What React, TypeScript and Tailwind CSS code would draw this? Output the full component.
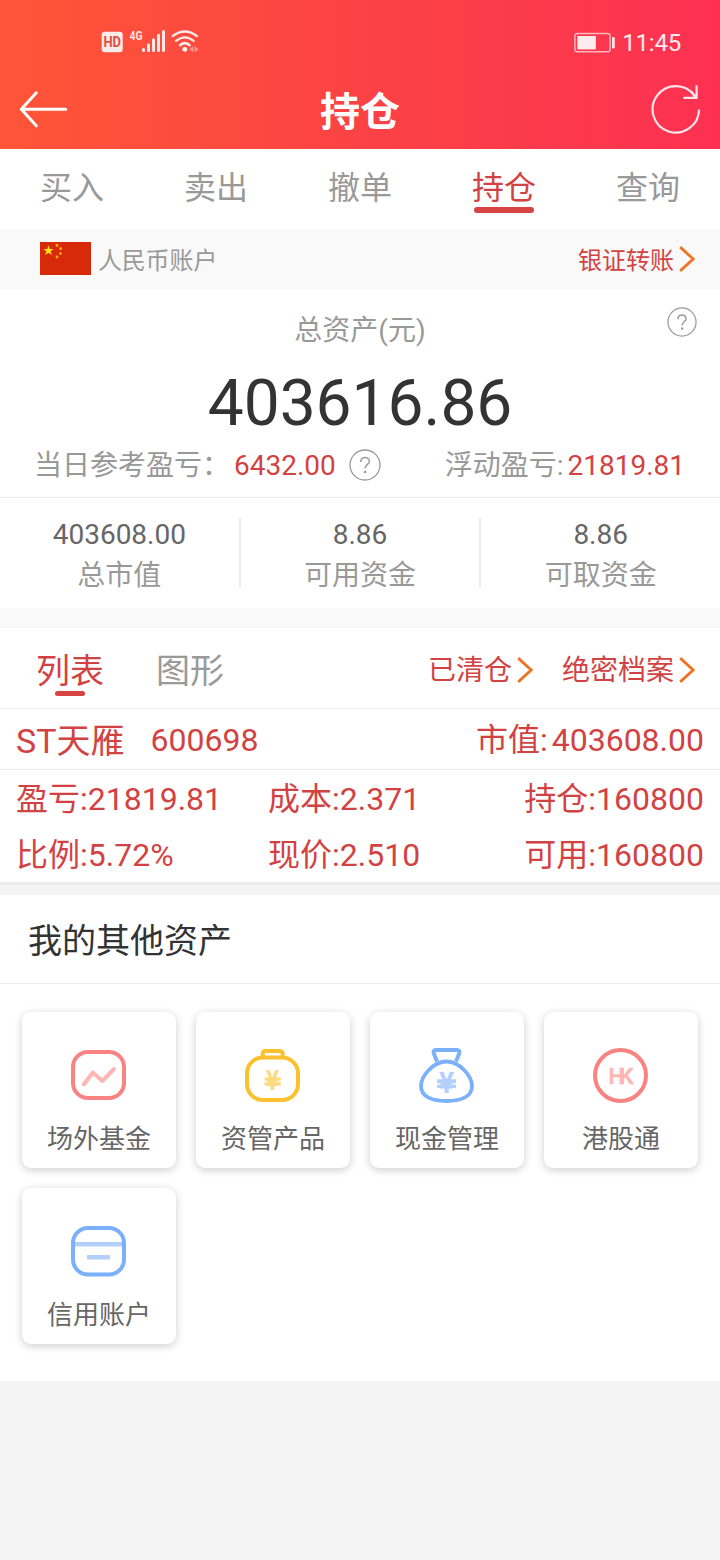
import type { ReactNode } from "react";

const tabs = ["买入", "卖出", "撤单", "持仓", "查询"];

const funds = [
  { value: "403608.00", label: "总市值" },
  { value: "8.86", label: "可用资金" },
  { value: "8.86", label: "可取资金" },
];

function StatusBar() {
  return (
    <div className="flex h-[70px] items-start justify-between pr-[39px] pl-[101px]">
      <svg className="mt-[28px]" width="100" height="28" viewBox="101 28 100 28" fill="none">
        <rect x="101.7" y="31.7" width="21" height="20.6" rx="3" fill="#ffeaea" />
        <text x="103.4" y="46.9" textLength="17.6" lengthAdjust="spacingAndGlyphs" fill="#e0503f" fontFamily="Roboto" fontWeight="700" fontSize="14.5">HD</text>
        <text x="129.6" y="40" textLength="13" lengthAdjust="spacingAndGlyphs" fill="#ffe3e0" fontFamily="Roboto" fontWeight="700" fontSize="13.5">4G</text>
        <g stroke="#ffeae8" strokeWidth="3" strokeLinecap="round">
          <path d="M143.5 49.6v.8M148.5 44.7v5.700M153.5 39.7v10.700M158.5 35.2v15.200M163.5 31.5v18.900" />
        </g>
        <g stroke="#ffeae8" strokeWidth="2.3" strokeLinecap="round">
          <path d="M172.6 36.1Q184.8 27 197 36.1" />
          <path d="M176 40.9Q184.8 33.8 193.6 40.9" />
          <path d="M180 45.2Q184.8 41 189.6 45.2" strokeWidth="2.5" />
        </g>
        <circle cx="184.8" cy="49.3" r="2.4" fill="#fff" />
        <path d="M193.3 46.2v6l-4-3zM194.6 46.2v6l4-3z" fill="#ff9d92" />
      </svg>
      <div className="mt-[29px] flex items-center gap-[6px] text-white/90">
        <svg className="-mt-[2px]" width="42" height="21" viewBox="0 0 42 21" fill="none">
          <rect x=".9" y="1.4" width="35.2" height="18.4" rx="2.6" stroke="#ffb5bb" strokeWidth="1.5" />
          <rect x="3.3" y="4" width="18.6" height="13.4" fill="#ffeaec" />
          <rect x="38" y="5" width="2.8" height="11.4" rx="1" fill="#ffe0e3" />
        </svg>
        <span className="text-[24px] leading-[28px] tracking-[-0.2px]">11:45</span>
      </div>
    </div>
  );
}

function Header() {
  return (
    <header className="h-[149px] bg-linear-to-r from-[#ff5537] via-[#fb4244] to-[#fd3052]">
      <StatusBar />
      <div className="flex h-[79px] items-center justify-between pr-[18px] pl-[18px]">
        <svg width="52" height="44" viewBox="18 88 52 44" fill="none" stroke="#fff" strokeWidth="3" strokeLinecap="round" strokeLinejoin="round">
          <path d="M65.7 109.3H21.5M36.3 92.8L21.3 109.3L36.3 125.8" />
        </svg>
        <h1 className="pt-[6px] text-[40px] leading-[48px] font-bold text-white">持仓</h1>
        <svg width="52" height="54" viewBox="650 83 52 54" fill="none" stroke="#ffe6e9" strokeWidth="2.2">
          <path d="M699 109.5A23.2 23.2 0 1 1 694.6 95.8" />
          <path d="M683.4 97.9H696.6V85.3M696 97.5L691.5 92" />
        </svg>
      </div>
    </header>
  );
}

function Chevron() {
  return (
    <svg className="-mt-[1px]" width="18" height="28" viewBox="-1 0.5 18 28" fill="none" stroke="#ee7422" strokeWidth="2.8">
      <path d="M1.200 2.6L14.200 14.500L1.200 26.400" />
    </svg>
  );
}

function Help({ size }: { size: number }) {
  return (
    <svg width={size} height={size} viewBox="0 0 32 32" fill="none" stroke="#999" strokeWidth="1.3">
      <circle cx="16" cy="16" r="15" />
      <path d="M11.7 13C11.7 7.200 20.4 7.200 20.4 12.4C20.4 15.4 16.1 15.6 16.1 19.6" strokeWidth="1.5" />
      <circle cx="16.1" cy="23" r=".7" fill="#999" />
    </svg>
  );
}

function Flag() {
  return (
    <svg className="-mt-[2px]" width="51" height="33" viewBox="0 0 51 33">
      <rect width="51" height="33" fill="#d82a08" />
      <path d="M8.5 3.2l1.3 3.7h3.9l-3.1 2.4 1.1 3.8-3.2-2.3-3.2 2.3 1.1-3.8-3.1-2.4h3.9z" fill="#ffe012" />
      <g fill="#f5b90e">
        <circle cx="17" cy="3.5" r="1.4" />
        <circle cx="20.6" cy="6.7" r="1.4" />
        <circle cx="20.4" cy="11.6" r="1.4" />
        <circle cx="17" cy="15" r="1.4" />
      </g>
    </svg>
  );
}

function AssetCard({ label, children }: { label: string; children: ReactNode }) {
  return (
    <div className="flex h-[156px] flex-col items-center rounded-[9px] bg-white pt-[32px] shadow-[0_2px_8px_rgba(0,0,0,0.2)]">
      <svg width="60" height="64" viewBox="0.500 0 60 64" fill="none" strokeWidth="4">
        {children}
      </svg>
      <span className="mt-[14px] text-[26px] leading-[34px] text-[#666]">{label}</span>
    </div>
  );
}

export default function App() {
  return (
    <div className="min-h-[1560px] w-[720px] bg-[#f4f4f4] font-[Roboto,'Noto_Sans_CJK_SC',sans-serif] whitespace-nowrap">
      <Header />

      <nav className="grid h-[80px] grid-cols-5 bg-white text-[32px] leading-[40px] text-[#999]">
        {tabs.map((tab) => (
          <div key={tab} className="flex flex-col items-center pt-[19px]">
            <span className={tab === "持仓" ? "text-[#d34242]" : ""}>{tab}</span>
            {tab === "持仓" && <span className="-mt-[1px] h-[6px] w-[60px] rounded-full bg-[#d84444]" />}
          </div>
        ))}
      </nav>

      <div className="flex h-[60px] items-center bg-[#f9f9f9] pr-[24px] pl-[40px] text-[24px] leading-[32px]">
        <Flag />
        <span className="ml-[7px] flex-1 pt-[3px] tracking-[-0.2px] text-[#999]">人民币账户</span>
        <span className="mr-[4px] pt-[3px] text-[#d34242]">银证转账</span>
        <Chevron />
      </div>

      <section className="h-[209px] border-b border-[#ebebeb] bg-white">
        <div className="flex items-start justify-between px-[23px] pt-[18px]">
          <span className="w-[30px]" />
          <span className="mt-[6px] text-[28px] leading-[36px] text-[#999]">总资产(元)</span>
          <Help size={30} />
        </div>
        <div className="mt-[20px] text-center text-[64px] leading-[70px] text-[#333]">403616.86</div>
        <div className="mt-[7px] flex items-center pr-[35px] pl-[34px] text-[28px] leading-[40px]">
          <span className="text-[#999]">当日参考盈亏：</span>
          <span className="ml-[4px] text-[#d34242]">6432.00</span>
          <span className="-mt-[3px] ml-[13px]"><Help size={32} /></span>
          <span className="ml-auto text-[#999]">浮动盈亏:</span>
          <span className="ml-[4px] text-[#d34242]">21819.81</span>
        </div>
      </section>

      <section className="flex h-[110px] items-center bg-white">
        {funds.map(({ value, label }, i) => (
          <div key={label} className={`flex h-[70px] flex-1 flex-col items-center text-[28px] ${i < 2 ? "border-r-2 border-[#ebebeb]" : ""}`}>
            <span className="pt-[1px] leading-[32px] text-[#666]">{value}</span>
            <span className="mt-[7px] leading-[36px] text-[#999]">{label}</span>
          </div>
        ))}
      </section>

      <div className="h-[20px] bg-[#f9f9f9]" />

      <div className="flex h-[81px] items-start border-b border-[#ebebeb] bg-white pr-[24px] pl-[36px] text-[34px]">
        <div className="flex flex-col items-center pt-[22px]">
          <span className="leading-[42px] text-[#d34242]">列表</span>
          <span className="-mt-[1px] h-[5px] w-[30px] rounded-full bg-[#d84444]" />
        </div>
        <span className="ml-[52px] flex-1 pt-[22px] leading-[42px] text-[#999]">图形</span>
        <div className="flex items-center pt-[21px] text-[28px] leading-[40px] text-[#d34242]">
          <span className="mr-[4px] pt-[2px]">已清仓</span>
          <Chevron />
          <span className="mr-[4px] ml-[28px] pt-[2px]">绝密档案</span>
          <Chevron />
        </div>
      </div>

      <section className="border-b-[3px] border-[#ebebeb] bg-white text-[32px] text-[#d34242]">
        <div className="flex h-[61px] items-center border-b border-[#ebebeb] px-[16px] pt-[2px] leading-[40px]">
          <span className="pt-[1px] text-[34px]">ST天雁</span>
          <span className="ml-[26px]">600698</span>
          <span className="ml-auto">市值:</span>
          <span className="ml-[4px]">403608.00</span>
        </div>
        <div className="grid h-[112px] grid-cols-[252px_1fr_auto] grid-rows-2 px-[16px] leading-[58px]">
          <span>盈亏:21819.81</span>
          <span>成本:2.371</span>
          <span>持仓:160800</span>
          <span>比例:5.72%</span>
          <span>现价:2.510</span>
          <span>可用:160800</span>
        </div>
      </section>

      <section className="mt-[10px] h-[486px] bg-white">
        <h2 className="h-[89px] border-b border-[#ebebeb] pl-[28px] text-[34px] leading-[93px] font-normal text-[#333]">我的其他资产</h2>
        <div className="grid grid-cols-4 gap-[20px] px-[22px] pt-[28px]">
          <AssetCard label="场外基金">
            <rect x="4.500" y="8" width="51" height="46" rx="15" stroke="#f98282" />
            <path d="M15.300 40.500L24.300 28.500L33.800 37L45.500 25" stroke="#fdb5b5" strokeLinecap="round" strokeLinejoin="round" />
          </AssetCard>
          <AssetCard label="资管产品">
            <path d="M20.2 13V10Q20.2 7 23 7H37Q40.2 7 40.2 10V13" stroke="#fbc02d" />
            <rect x="4.500" y="13.500" width="51" height="42.500" rx="16" stroke="#fbc02d" />
            <text x="23.300" y="46" textLength="13.400" lengthAdjust="spacingAndGlyphs" fill="#fdda80" fontFamily="Inter" fontWeight="700" fontSize="27">¥</text>
            <path d="M22 35.200H38.300M22 39.900H38.300" stroke="#fdda80" strokeWidth="3.200" />
          </AssetCard>
          <AssetCard label="现金管理">
            <path d="M20.500 17.500L17.300 9.500Q16.400 6 19.500 6H40.500Q43.600 6 42.700 9.500L39.500 17.500" stroke="#7bb0fb" />
            <path d="M30 17.500C43 17.500 55.500 32 55.500 42C55.500 53 44 57 30 57S4.500 53 4.500 42C4.500 32 17 17.500 30 17.500Z" stroke="#7bb0fb" strokeWidth="3.800" />
            <text x="22.300" y="49" textLength="15.600" lengthAdjust="spacingAndGlyphs" fill="#b3d0fc" fontFamily="Inter" fontWeight="700" fontSize="28.500">¥</text>
            <path d="M20.600 37.100H39.600M20.600 42.300H39.600" stroke="#b3d0fc" strokeWidth="3.600" />
          </AssetCard>
          <AssetCard label="港股通">
            <circle cx="30" cy="31.500" r="25.500" stroke="#f98282" />
            <text x="18" y="40" textLength="25" lengthAdjust="spacing" fill="#fdb5b5" stroke="#fdb5b5" strokeWidth=".6" strokeLinejoin="round" fontFamily="Roboto" fontWeight="500" fontSize="22.500">HK</text>
          </AssetCard>
          <AssetCard label="信用账户">
            <path d="M6 24.300H54M18.500 37.300H41.500" stroke="#b3d0fc" strokeWidth="4.500" />
            <rect x="4.500" y="8" width="51" height="46.500" rx="15" stroke="#7bb0fb" />
          </AssetCard>
        </div>
      </section>
    </div>
  );
}
